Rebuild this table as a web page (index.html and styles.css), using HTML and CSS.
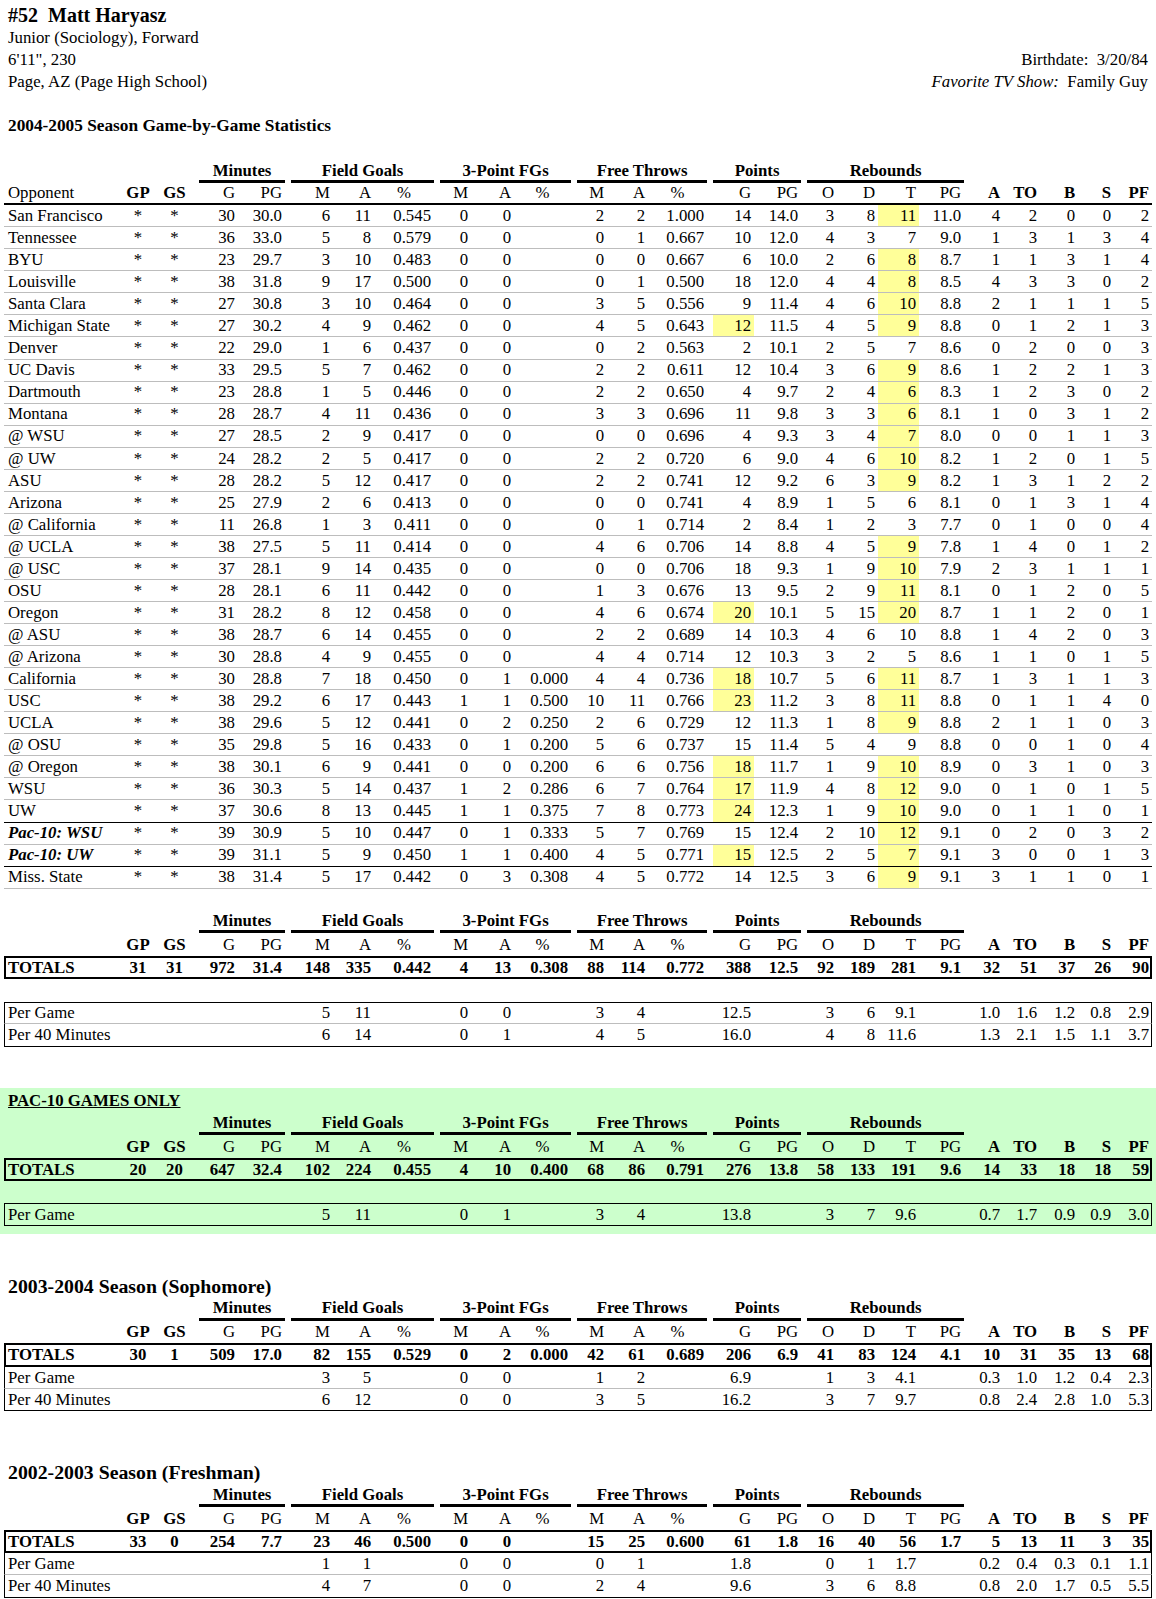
FILE: index.html
```html
<!DOCTYPE html>
<html>
<head>
<meta charset="utf-8">
<title>#52 Matt Haryasz</title>
<link rel="stylesheet" href="styles.css">
</head>
<body>
<div class="page">
  <div class="bio">
    <div class="bio-left">
      <div class="bio-name">#52&nbsp; Matt Haryasz</div>
      <div class="bio-line">Junior (Sociology), Forward</div>
      <div class="bio-line">6'11", 230</div>
      <div class="bio-line">Page, AZ (Page High School)</div>
    </div>
    <div class="bio-right">
      <div class="bio-line">Birthdate:&nbsp; 3/20/84</div>
      <div class="bio-line"><i>Favorite TV Show:</i>&nbsp; Family Guy</div>
    </div>
  </div>

  <div class="season-title">2004-2005 Season Game-by-Game Statistics</div>

  <table class="stats game">
    <colgroup><col class="k1"><col class="k2"><col class="k3"><col class="k4"><col class="k5"><col class="k6"><col class="k7"><col class="k8"><col class="k9"><col class="k10"><col class="k11"><col class="k12"><col class="k13"><col class="k14"><col class="k15"><col class="k16"><col class="k17"><col class="k18"><col class="k19"><col class="k20"><col class="k21"><col class="k22"><col class="k23"><col class="k24"><col class="k25"></colgroup>
    <thead>
      <tr class="grp"><th colspan="3"></th><th colspan="2"><div>Minutes</div></th><th colspan="3"><div>Field Goals</div></th><th colspan="3"><div>3-Point FGs</div></th><th colspan="3"><div>Free Throws</div></th><th colspan="2"><div>Points</div></th><th colspan="4"><div>Rebounds</div></th><th colspan="5"></th></tr>
      <tr class="hdr line"><th class="o">Opponent</th><th class="c b">GP</th><th class="c b">GS</th><th>G</th><th>PG</th><th>M</th><th>A</th><th class="c">%</th><th>M</th><th>A</th><th class="c">%</th><th>M</th><th>A</th><th class="c">%</th><th>G</th><th>PG</th><th>O</th><th>D</th><th>T</th><th>PG</th><th class="b">A</th><th class="b">TO</th><th class="b">B</th><th class="b">S</th><th class="b">PF</th></tr>
    </thead>
    <tbody>
<tr><td class=o>San Francisco<td class=c>*<td class=c>*<td>30<td>30.0<td>6<td>11<td>0.545<td>0<td>0<td><td>2<td>2<td>1.000<td>14<td>14.0<td>3<td>8<td class=h>11<td>11.0<td>4<td>2<td>0<td>0<td>2</tr>
<tr><td class=o>Tennessee<td class=c>*<td class=c>*<td>36<td>33.0<td>5<td>8<td>0.579<td>0<td>0<td><td>0<td>1<td>0.667<td>10<td>12.0<td>4<td>3<td>7<td>9.0<td>1<td>3<td>1<td>3<td>4</tr>
<tr><td class=o>BYU<td class=c>*<td class=c>*<td>23<td>29.7<td>3<td>10<td>0.483<td>0<td>0<td><td>0<td>0<td>0.667<td>6<td>10.0<td>2<td>6<td class=h>8<td>8.7<td>1<td>1<td>3<td>1<td>4</tr>
<tr><td class=o>Louisville<td class=c>*<td class=c>*<td>38<td>31.8<td>9<td>17<td>0.500<td>0<td>0<td><td>0<td>1<td>0.500<td>18<td>12.0<td>4<td>4<td class=h>8<td>8.5<td>4<td>3<td>3<td>0<td>2</tr>
<tr><td class=o>Santa Clara<td class=c>*<td class=c>*<td>27<td>30.8<td>3<td>10<td>0.464<td>0<td>0<td><td>3<td>5<td>0.556<td>9<td>11.4<td>4<td>6<td class=h>10<td>8.8<td>2<td>1<td>1<td>1<td>5</tr>
<tr><td class=o>Michigan State<td class=c>*<td class=c>*<td>27<td>30.2<td>4<td>9<td>0.462<td>0<td>0<td><td>4<td>5<td>0.643<td class=p>12<td>11.5<td>4<td>5<td class=h>9<td>8.8<td>0<td>1<td>2<td>1<td>3</tr>
<tr><td class=o>Denver<td class=c>*<td class=c>*<td>22<td>29.0<td>1<td>6<td>0.437<td>0<td>0<td><td>0<td>2<td>0.563<td>2<td>10.1<td>2<td>5<td>7<td>8.6<td>0<td>2<td>0<td>0<td>3</tr>
<tr><td class=o>UC Davis<td class=c>*<td class=c>*<td>33<td>29.5<td>5<td>7<td>0.462<td>0<td>0<td><td>2<td>2<td>0.611<td>12<td>10.4<td>3<td>6<td class=h>9<td>8.6<td>1<td>2<td>2<td>1<td>3</tr>
<tr><td class=o>Dartmouth<td class=c>*<td class=c>*<td>23<td>28.8<td>1<td>5<td>0.446<td>0<td>0<td><td>2<td>2<td>0.650<td>4<td>9.7<td>2<td>4<td class=h>6<td>8.3<td>1<td>2<td>3<td>0<td>2</tr>
<tr><td class=o>Montana<td class=c>*<td class=c>*<td>28<td>28.7<td>4<td>11<td>0.436<td>0<td>0<td><td>3<td>3<td>0.696<td>11<td>9.8<td>3<td>3<td class=h>6<td>8.1<td>1<td>0<td>3<td>1<td>2</tr>
<tr><td class=o>@ WSU<td class=c>*<td class=c>*<td>27<td>28.5<td>2<td>9<td>0.417<td>0<td>0<td><td>0<td>0<td>0.696<td>4<td>9.3<td>3<td>4<td class=h>7<td>8.0<td>0<td>0<td>1<td>1<td>3</tr>
<tr><td class=o>@ UW<td class=c>*<td class=c>*<td>24<td>28.2<td>2<td>5<td>0.417<td>0<td>0<td><td>2<td>2<td>0.720<td>6<td>9.0<td>4<td>6<td class=h>10<td>8.2<td>1<td>2<td>0<td>1<td>5</tr>
<tr><td class=o>ASU<td class=c>*<td class=c>*<td>28<td>28.2<td>5<td>12<td>0.417<td>0<td>0<td><td>2<td>2<td>0.741<td>12<td>9.2<td>6<td>3<td class=h>9<td>8.2<td>1<td>3<td>1<td>2<td>2</tr>
<tr><td class=o>Arizona<td class=c>*<td class=c>*<td>25<td>27.9<td>2<td>6<td>0.413<td>0<td>0<td><td>0<td>0<td>0.741<td>4<td>8.9<td>1<td>5<td>6<td>8.1<td>0<td>1<td>3<td>1<td>4</tr>
<tr><td class=o>@ California<td class=c>*<td class=c>*<td>11<td>26.8<td>1<td>3<td>0.411<td>0<td>0<td><td>0<td>1<td>0.714<td>2<td>8.4<td>1<td>2<td>3<td>7.7<td>0<td>1<td>0<td>0<td>4</tr>
<tr><td class=o>@ UCLA<td class=c>*<td class=c>*<td>38<td>27.5<td>5<td>11<td>0.414<td>0<td>0<td><td>4<td>6<td>0.706<td>14<td>8.8<td>4<td>5<td class=h>9<td>7.8<td>1<td>4<td>0<td>1<td>2</tr>
<tr><td class=o>@ USC<td class=c>*<td class=c>*<td>37<td>28.1<td>9<td>14<td>0.435<td>0<td>0<td><td>0<td>0<td>0.706<td>18<td>9.3<td>1<td>9<td class=h>10<td>7.9<td>2<td>3<td>1<td>1<td>1</tr>
<tr><td class=o>OSU<td class=c>*<td class=c>*<td>28<td>28.1<td>6<td>11<td>0.442<td>0<td>0<td><td>1<td>3<td>0.676<td>13<td>9.5<td>2<td>9<td class=h>11<td>8.1<td>0<td>1<td>2<td>0<td>5</tr>
<tr><td class=o>Oregon<td class=c>*<td class=c>*<td>31<td>28.2<td>8<td>12<td>0.458<td>0<td>0<td><td>4<td>6<td>0.674<td class=p>20<td>10.1<td>5<td>15<td class=h>20<td>8.7<td>1<td>1<td>2<td>0<td>1</tr>
<tr><td class=o>@ ASU<td class=c>*<td class=c>*<td>38<td>28.7<td>6<td>14<td>0.455<td>0<td>0<td><td>2<td>2<td>0.689<td>14<td>10.3<td>4<td>6<td>10<td>8.8<td>1<td>4<td>2<td>0<td>3</tr>
<tr><td class=o>@ Arizona<td class=c>*<td class=c>*<td>30<td>28.8<td>4<td>9<td>0.455<td>0<td>0<td><td>4<td>4<td>0.714<td>12<td>10.3<td>3<td>2<td>5<td>8.6<td>1<td>1<td>0<td>1<td>5</tr>
<tr><td class=o>California<td class=c>*<td class=c>*<td>30<td>28.8<td>7<td>18<td>0.450<td>0<td>1<td>0.000<td>4<td>4<td>0.736<td class=p>18<td>10.7<td>5<td>6<td class=h>11<td>8.7<td>1<td>3<td>1<td>1<td>3</tr>
<tr><td class=o>USC<td class=c>*<td class=c>*<td>38<td>29.2<td>6<td>17<td>0.443<td>1<td>1<td>0.500<td>10<td>11<td>0.766<td class=p>23<td>11.2<td>3<td>8<td class=h>11<td>8.8<td>0<td>1<td>1<td>4<td>0</tr>
<tr><td class=o>UCLA<td class=c>*<td class=c>*<td>38<td>29.6<td>5<td>12<td>0.441<td>0<td>2<td>0.250<td>2<td>6<td>0.729<td>12<td>11.3<td>1<td>8<td class=h>9<td>8.8<td>2<td>1<td>1<td>0<td>3</tr>
<tr><td class=o>@ OSU<td class=c>*<td class=c>*<td>35<td>29.8<td>5<td>16<td>0.433<td>0<td>1<td>0.200<td>5<td>6<td>0.737<td>15<td>11.4<td>5<td>4<td>9<td>8.8<td>0<td>0<td>1<td>0<td>4</tr>
<tr><td class=o>@ Oregon<td class=c>*<td class=c>*<td>38<td>30.1<td>6<td>9<td>0.441<td>0<td>0<td>0.200<td>6<td>6<td>0.756<td class=p>18<td>11.7<td>1<td>9<td class=h>10<td>8.9<td>0<td>3<td>1<td>0<td>3</tr>
<tr><td class=o>WSU<td class=c>*<td class=c>*<td>36<td>30.3<td>5<td>14<td>0.437<td>1<td>2<td>0.286<td>6<td>7<td>0.764<td class=p>17<td>11.9<td>4<td>8<td class=h>12<td>9.0<td>0<td>1<td>0<td>1<td>5</tr>
<tr class=bk><td class=o>UW<td class=c>*<td class=c>*<td>37<td>30.6<td>8<td>13<td>0.445<td>1<td>1<td>0.375<td>7<td>8<td>0.773<td class=p>24<td>12.3<td>1<td>9<td class=h>10<td>9.0<td>0<td>1<td>1<td>0<td>1</tr>
<tr><td class=o><b><i>Pac-10: WSU</i></b><td class=c>*<td class=c>*<td>39<td>30.9<td>5<td>10<td>0.447<td>0<td>1<td>0.333<td>5<td>7<td>0.769<td>15<td>12.4<td>2<td>10<td class=h>12<td>9.1<td>0<td>2<td>0<td>3<td>2</tr>
<tr class=bk><td class=o><b><i>Pac-10: UW</i></b><td class=c>*<td class=c>*<td>39<td>31.1<td>5<td>9<td>0.450<td>1<td>1<td>0.400<td>4<td>5<td>0.771<td class=p>15<td>12.5<td>2<td>5<td class=h>7<td>9.1<td>3<td>0<td>0<td>1<td>3</tr>
<tr><td class=o>Miss. State<td class=c>*<td class=c>*<td>38<td>31.4<td>5<td>17<td>0.442<td>0<td>3<td>0.308<td>4<td>5<td>0.772<td>14<td>12.5<td>3<td>6<td class=h>9<td>9.1<td>3<td>1<td>1<td>0<td>1</tr>
    </tbody>
  </table>

  <table class="stats sum">
    <colgroup><col class="k1"><col class="k2"><col class="k3"><col class="k4"><col class="k5"><col class="k6"><col class="k7"><col class="k8"><col class="k9"><col class="k10"><col class="k11"><col class="k12"><col class="k13"><col class="k14"><col class="k15"><col class="k16"><col class="k17"><col class="k18"><col class="k19"><col class="k20"><col class="k21"><col class="k22"><col class="k23"><col class="k24"><col class="k25"></colgroup>
    <thead>
      <tr class="grp"><th colspan="3"></th><th colspan="2"><div>Minutes</div></th><th colspan="3"><div>Field Goals</div></th><th colspan="3"><div>3-Point FGs</div></th><th colspan="3"><div>Free Throws</div></th><th colspan="2"><div>Points</div></th><th colspan="4"><div>Rebounds</div></th><th colspan="5"></th></tr>
      <tr class="hdr"><th class="o"></th><th class="c b">GP</th><th class="c b">GS</th><th>G</th><th>PG</th><th>M</th><th>A</th><th class="c">%</th><th>M</th><th>A</th><th class="c">%</th><th>M</th><th>A</th><th class="c">%</th><th>G</th><th>PG</th><th>O</th><th>D</th><th>T</th><th>PG</th><th class="b">A</th><th class="b">TO</th><th class="b">B</th><th class="b">S</th><th class="b">PF</th></tr>
    </thead>
    <tbody>
<tr class=tot><td class=o>TOTALS<td class=c>31<td class=c>31<td>972<td>31.4<td>148<td>335<td>0.442<td>4<td>13<td>0.308<td>88<td>114<td>0.772<td>388<td>12.5<td>92<td>189<td>281<td>9.1<td>32<td>51<td>37<td>26<td>90</tr>
<tr class=gap><td colspan=25></tr>
<tr class="pr top mid"><td class=o>Per Game<td><td><td><td><td>5<td>11<td><td>0<td>0<td><td>3<td>4<td><td>12.5<td><td>3<td>6<td>9.1<td><td>1.0<td>1.6<td>1.2<td>0.8<td>2.9</tr>
<tr class="pr end"><td class=o>Per 40 Minutes<td><td><td><td><td>6<td>14<td><td>0<td>1<td><td>4<td>5<td><td>16.0<td><td>4<td>8<td>11.6<td><td>1.3<td>2.1<td>1.5<td>1.1<td>3.7</tr>
    </tbody>
  </table>

  <div class="pac">
    <div class="pac-title">PAC-10 GAMES ONLY</div>
    <table class="stats">
      <colgroup><col class="k1"><col class="k2"><col class="k3"><col class="k4"><col class="k5"><col class="k6"><col class="k7"><col class="k8"><col class="k9"><col class="k10"><col class="k11"><col class="k12"><col class="k13"><col class="k14"><col class="k15"><col class="k16"><col class="k17"><col class="k18"><col class="k19"><col class="k20"><col class="k21"><col class="k22"><col class="k23"><col class="k24"><col class="k25"></colgroup>
      <thead>
        <tr class="grp"><th colspan="3"></th><th colspan="2"><div>Minutes</div></th><th colspan="3"><div>Field Goals</div></th><th colspan="3"><div>3-Point FGs</div></th><th colspan="3"><div>Free Throws</div></th><th colspan="2"><div>Points</div></th><th colspan="4"><div>Rebounds</div></th><th colspan="5"></th></tr>
        <tr class="hdr"><th class="o"></th><th class="c b">GP</th><th class="c b">GS</th><th>G</th><th>PG</th><th>M</th><th>A</th><th class="c">%</th><th>M</th><th>A</th><th class="c">%</th><th>M</th><th>A</th><th class="c">%</th><th>G</th><th>PG</th><th>O</th><th>D</th><th>T</th><th>PG</th><th class="b">A</th><th class="b">TO</th><th class="b">B</th><th class="b">S</th><th class="b">PF</th></tr>
      </thead>
      <tbody>
<tr class=tot><td class=o>TOTALS<td class=c>20<td class=c>20<td>647<td>32.4<td>102<td>224<td>0.455<td>4<td>10<td>0.400<td>68<td>86<td>0.791<td>276<td>13.8<td>58<td>133<td>191<td>9.6<td>14<td>33<td>18<td>18<td>59</tr>
<tr class=gap><td colspan=25></tr>
<tr class="pr top end"><td class=o>Per Game<td><td><td><td><td>5<td>11<td><td>0<td>1<td><td>3<td>4<td><td>13.8<td><td>3<td>7<td>9.6<td><td>0.7<td>1.7<td>0.9<td>0.9<td>3.0</tr>
      </tbody>
    </table>
  </div>

  <div class="year-title">2003-2004 Season (Sophomore)</div>
  <table class="stats year">
    <colgroup><col class="k1"><col class="k2"><col class="k3"><col class="k4"><col class="k5"><col class="k6"><col class="k7"><col class="k8"><col class="k9"><col class="k10"><col class="k11"><col class="k12"><col class="k13"><col class="k14"><col class="k15"><col class="k16"><col class="k17"><col class="k18"><col class="k19"><col class="k20"><col class="k21"><col class="k22"><col class="k23"><col class="k24"><col class="k25"></colgroup>
    <thead>
      <tr class="grp"><th colspan="3"></th><th colspan="2"><div>Minutes</div></th><th colspan="3"><div>Field Goals</div></th><th colspan="3"><div>3-Point FGs</div></th><th colspan="3"><div>Free Throws</div></th><th colspan="2"><div>Points</div></th><th colspan="4"><div>Rebounds</div></th><th colspan="5"></th></tr>
      <tr class="hdr"><th class="o"></th><th class="c b">GP</th><th class="c b">GS</th><th>G</th><th>PG</th><th>M</th><th>A</th><th class="c">%</th><th>M</th><th>A</th><th class="c">%</th><th>M</th><th>A</th><th class="c">%</th><th>G</th><th>PG</th><th>O</th><th>D</th><th>T</th><th>PG</th><th class="b">A</th><th class="b">TO</th><th class="b">B</th><th class="b">S</th><th class="b">PF</th></tr>
    </thead>
    <tbody>
<tr class=tot><td class=o>TOTALS<td class=c>30<td class=c>1<td>509<td>17.0<td>82<td>155<td>0.529<td>0<td>2<td>0.000<td>42<td>61<td>0.689<td>206<td>6.9<td>41<td>83<td>124<td>4.1<td>10<td>31<td>35<td>13<td>68</tr>
<tr class="pr mid"><td class=o>Per Game<td><td><td><td><td>3<td>5<td><td>0<td>0<td><td>1<td>2<td><td>6.9<td><td>1<td>3<td>4.1<td><td>0.3<td>1.0<td>1.2<td>0.4<td>2.3</tr>
<tr class="pr end"><td class=o>Per 40 Minutes<td><td><td><td><td>6<td>12<td><td>0<td>0<td><td>3<td>5<td><td>16.2<td><td>3<td>7<td>9.7<td><td>0.8<td>2.4<td>2.8<td>1.0<td>5.3</tr>
    </tbody>
  </table>

  <div class="year-title later">2002-2003 Season (Freshman)</div>
  <table class="stats year">
    <colgroup><col class="k1"><col class="k2"><col class="k3"><col class="k4"><col class="k5"><col class="k6"><col class="k7"><col class="k8"><col class="k9"><col class="k10"><col class="k11"><col class="k12"><col class="k13"><col class="k14"><col class="k15"><col class="k16"><col class="k17"><col class="k18"><col class="k19"><col class="k20"><col class="k21"><col class="k22"><col class="k23"><col class="k24"><col class="k25"></colgroup>
    <thead>
      <tr class="grp"><th colspan="3"></th><th colspan="2"><div>Minutes</div></th><th colspan="3"><div>Field Goals</div></th><th colspan="3"><div>3-Point FGs</div></th><th colspan="3"><div>Free Throws</div></th><th colspan="2"><div>Points</div></th><th colspan="4"><div>Rebounds</div></th><th colspan="5"></th></tr>
      <tr class="hdr"><th class="o"></th><th class="c b">GP</th><th class="c b">GS</th><th>G</th><th>PG</th><th>M</th><th>A</th><th class="c">%</th><th>M</th><th>A</th><th class="c">%</th><th>M</th><th>A</th><th class="c">%</th><th>G</th><th>PG</th><th>O</th><th>D</th><th>T</th><th>PG</th><th class="b">A</th><th class="b">TO</th><th class="b">B</th><th class="b">S</th><th class="b">PF</th></tr>
    </thead>
    <tbody>
<tr class=tot><td class=o>TOTALS<td class=c>33<td class=c>0<td>254<td>7.7<td>23<td>46<td>0.500<td>0<td>0<td><td>15<td>25<td>0.600<td>61<td>1.8<td>16<td>40<td>56<td>1.7<td>5<td>13<td>11<td>3<td>35</tr>
<tr class="pr mid"><td class=o>Per Game<td><td><td><td><td>1<td>1<td><td>0<td>0<td><td>0<td>1<td><td>1.8<td><td>0<td>1<td>1.7<td><td>0.2<td>0.4<td>0.3<td>0.1<td>1.1</tr>
<tr class="pr end"><td class=o>Per 40 Minutes<td><td><td><td><td>4<td>7<td><td>0<td>0<td><td>2<td>4<td><td>9.6<td><td>3<td>6<td>8.8<td><td>0.8<td>2.0<td>1.7<td>0.5<td>5.5</tr>
    </tbody>
  </table>
</div>
</body>
</html>
```

FILE: styles.css
```css
html, body {
  margin: 0;
  padding: 0;
  background: #fff;
}

body {
  font-family: "Liberation Serif", "Times New Roman", Times, serif;
  font-size: 16.8px;
  color: #000;
}

.page {
  width: 1156px;
  padding-top: 4px;
}

/* ---------- bio header ---------- */
.bio {
  display: flex;
  justify-content: space-between;
  align-items: flex-end;
  margin: 0 8px 0 8px;
}

.bio-name {
  font-size: 20px;
  font-weight: bold;
  line-height: 23.4px;
}

.bio-line {
  line-height: 21.9px;
}

.bio-right {
  text-align: right;
}

.season-title {
  margin: 22.2px 0 0 8px;
  font-size: 17.3px;
  font-weight: bold;
  line-height: 21.9px;
}

.year-title {
  margin: 40.8px 0 0 8px;
  font-size: 19.8px;
  font-weight: bold;
  line-height: 22.4px;
}

.year-title.later {
  margin-top: 50px;
}

/* ---------- stat tables ---------- */
.stats {
  border-collapse: separate;
  border-spacing: 0;
  table-layout: fixed;
  width: 1148px;
  margin-left: 4px;
}

.stats tr {
  height: 22.43px;
}

.stats.game {
  margin-top: 23.9px;
}

.stats.game tr {
  height: 22.05px;
}

.stats.sum {
  margin-top: 22.4px;
}

.stats.year {
  margin-top: 1px;
}

.k1 { width: 116px; }
.k2 { width: 36px; }
.k3 { width: 37px; }
.k4 { width: 45px; }
.k5 { width: 47px; }
.k6 { width: 48px; }
.k7 { width: 41px; }
.k8 { width: 60px; }
.k9 { width: 37px; }
.k10 { width: 43px; }
.k11 { width: 57px; }
.k12 { width: 36px; }
.k13 { width: 41px; }
.k14 { width: 59px; }
.k15 { width: 47px; }
.k16 { width: 47px; }
.k17 { width: 36px; }
.k18 { width: 41px; }
.k19 { width: 41px; }
.k20 { width: 45px; }
.k21 { width: 39px; }
.k22 { width: 37px; }
.k23 { width: 38px; }
.k24 { width: 36px; }
.k25 { width: 38px; }

.stats th,
.stats td {
  padding: 0 3px 0 0;
  text-align: right;
  font-weight: normal;
  line-height: 19.4px;
  white-space: nowrap;
}

.stats th.b {
  font-weight: bold;
}

.stats .c {
  text-align: center;
  padding: 0;
}

.stats .o {
  text-align: left;
  padding-left: 4px;
}

/* group header with underline bars */
.stats .grp th {
  vertical-align: bottom;
  padding: 0;
  text-align: center;
  font-weight: bold;
}

.stats .grp th div {
  margin-left: 6px;
  border-bottom: 3px solid #000;
  line-height: 18.6px;
}

.stats .hdr.line th {
  border-bottom: 2px solid #000;
}

/* game rows */
.game tbody td {
  border-bottom: 1px solid #bdbdbd;
}

.game tbody tr.bk td {
  border-bottom-color: #000;
}

.stats td.h {
  background: #ffff99;
}

.stats td.p {
  background: linear-gradient(to right, transparent 6px, #ffff99 6px);
}

/* totals box */
.stats .tot td {
  font-weight: bold;
  border-top: 2px solid #000;
  border-bottom: 2px solid #000;
}

.stats .tot td:first-child {
  border-left: 2px solid #000;
  padding-left: 2px;
}

.stats .tot td:last-child {
  border-right: 2px solid #000;
  padding-right: 1px;
}

/* per game / per 40 rows */
.stats .pr td:first-child {
  border-left: 1px solid #000;
  padding-left: 3px;
}

.stats .pr td:last-child {
  border-right: 1px solid #000;
  padding-right: 2px;
}

.stats .pr.top td {
  border-top: 1px solid #000;
}

.stats .pr.mid td {
  border-bottom: 1px solid #bdbdbd;
}

.stats .pr.end td {
  border-bottom: 1px solid #000;
}

/* pac-10 block */
.pac {
  margin-top: 41.8px;
  width: 1156px;
  padding: 2px 0 8.2px;
  background: #ccffcc;
}

.pac-title {
  margin-left: 8px;
  font-weight: bold;
  text-decoration: underline;
  line-height: 22.4px;
}
```
